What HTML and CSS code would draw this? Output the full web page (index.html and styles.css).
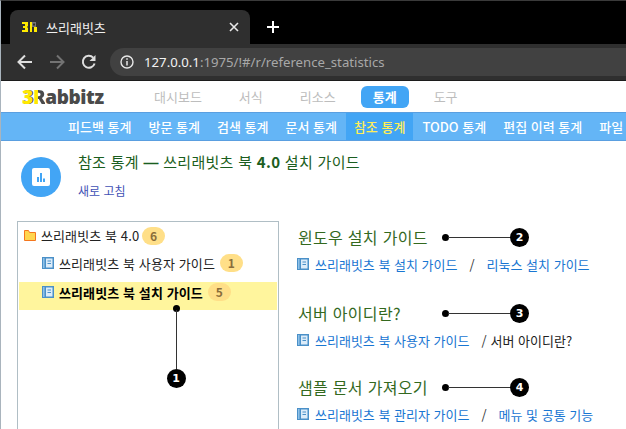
FILE: index.html
```html
<!DOCTYPE html>
<html lang="ko">
<head>
<meta charset="utf-8">
<title>쓰리래빗츠</title>
<link rel="stylesheet" href="styles.css">
</head>
<body>
<div class="window">
  <div class="tabstrip">
    <div class="tab">
      <svg class="favicon" width="16" height="10" viewBox="0 0 16 10"><path d="M0 0h6v4l-1 1 1 1v4H0V8h3V6H1V4h2V2H0z" fill="#ffeb00"/><rect x="8" y="0" width="2" height="10" fill="#ffeb00"/><path d="M10 0h4v5h-4z" fill="#777"/><path d="M11 1.500h2v2h-2z" fill="#2f2f2f"/><rect x="12" y="5" width="3" height="5" fill="#ffeb00"/></svg>
      <span class="tab-title">쓰리래빗츠</span>
      <svg class="tab-close" width="10" height="10" viewBox="0 0 10 10"><path d="M1 1l8 8M9 1l-8 8" stroke="#e8e8e8" stroke-width="1.6"/></svg>
    </div>
    <svg class="newtab" width="14" height="14" viewBox="0 0 14 14"><path d="M7 1v12M1 7h12" stroke="#fff" stroke-width="2"/></svg>
  </div>
  <div class="toolbar">
    <svg class="tb-btn" width="16" height="16" viewBox="0 0 16 16"><path d="M15 8H2M8 1.500L1.500 8 8 14.500" fill="none" stroke="#dedede" stroke-width="2"/></svg>
    <svg class="tb-btn" width="16" height="16" viewBox="0 0 16 16"><path d="M1 8h13M8 1.500L14.500 8 8 14.500" fill="none" stroke="#737373" stroke-width="2"/></svg>
    <svg class="tb-btn" width="16" height="16" viewBox="0 0 16 16"><path d="M13.600 9.500A6 6 0 1 1 12.200 3.600" fill="none" stroke="#dedede" stroke-width="2"/><path d="M14.500 1v6h-6z" fill="#dedede"/></svg>
    <div class="omnibox">
      <svg width="14" height="14" viewBox="0 0 14 14"><circle cx="7" cy="7" r="6" fill="none" stroke="#e8e8e8" stroke-width="1.400"/><path d="M7 6v4.500M7 3.300v1.500" stroke="#e8e8e8" stroke-width="1.500"/></svg>
      <span class="url"><span class="url-host">127.0.0.1</span>:1975/!#/r/reference_statistics</span>
    </div>
  </div>
  <div class="page">
    <header class="topnav">
      <div class="logo"><span class="logo-three">3</span><span class="logo-r">R</span>abbitz</div>
      <nav class="mainmenu">
        <a class="m1">대시보드</a><a class="m2">서식</a><a class="m3">리소스</a><a class="on">통계</a><a class="m5">도구</a>
      </nav>
    </header>
    <nav class="submenu">
      <a>피드백 통계</a><a>방문 통계</a><a>검색 통계</a><a>문서 통계</a><a class="active">참조 통계</a><a>TODO 통계</a><a>편집 이력 통계</a><a>파일</a>
    </nav>
    <section class="heading">
      <div class="badge">
        <svg width="18" height="18" viewBox="0 0 18 18"><rect width="18" height="18" rx="2" fill="#fff"/><path d="M5 9h2v5H5zM8 5h2v9H8zM11 10.500h2V14h-2z" fill="#42a5f5"/></svg>
      </div>
      <div class="heading-text">
        <h1>참조 통계 <b class="dash">—</b> 쓰리래빗츠 북 <b>4.0</b> 설치 가이드</h1>
        <a class="reload">새로 고침</a>
      </div>
    </section>
    <div class="columns">
      <div class="tree">
        <div class="row root">
          <svg width="12" height="11" viewBox="0 0 12 11"><path d="M.5 10.500V.5h4l1 2h6v8z" fill="#ffd54f" stroke="#f4761e"/></svg>
          <span>쓰리래빗츠 북 4.0</span><i class="count">6</i>
        </div>
        <div class="row child">
          <svg class="book" width="12" height="12" viewBox="0 0 12 12"><use href="#book"/></svg>
          <span>쓰리래빗츠 북 사용자 가이드</span><i class="count">1</i>
        </div>
        <div class="row child selected">
          <svg class="book" width="12" height="12" viewBox="0 0 12 12"><use href="#book"/></svg>
          <span>쓰리래빗츠 북 설치 가이드</span><i class="count">5</i>
        </div>
        <div class="callout-v"><em class="dot"></em><em class="line"></em><em class="num">1</em></div>
      </div>
      <div class="refs">
        <div class="ref">
          <div class="ref-title"><span class="ref-name">윈도우 설치 가이드</span><span class="callout-h"><em class="dot"></em><em class="line"></em><em class="num">2</em></span></div>
          <div class="ref-path"><svg class="book" width="12" height="12" viewBox="0 0 12 12"><use href="#book"/></svg><a>쓰리래빗츠 북 설치 가이드</a><span class="sep sep1">/</span><a>리눅스 설치 가이드</a></div>
        </div>
        <div class="ref">
          <div class="ref-title"><span class="ref-name">서버 아이디란?</span><span class="callout-h"><em class="dot"></em><em class="line"></em><em class="num">3</em></span></div>
          <div class="ref-path"><svg class="book" width="12" height="12" viewBox="0 0 12 12"><use href="#book"/></svg><a>쓰리래빗츠 북 사용자 가이드</a><span class="sep sep2">/</span><span class="plain">서버 아이디란?</span></div>
        </div>
        <div class="ref">
          <div class="ref-title"><span class="ref-name">샘플 문서 가져오기</span><span class="callout-h"><em class="dot"></em><em class="line"></em><em class="num">4</em></span></div>
          <div class="ref-path"><svg class="book" width="12" height="12" viewBox="0 0 12 12"><use href="#book"/></svg><a>쓰리래빗츠 북 관리자 가이드</a><span class="sep sep3">/</span><a>메뉴 및 공통 기능</a></div>
        </div>
      </div>
    </div>
  </div>
</div>
<svg class="defs" width="0" height="0"><symbol id="book" viewBox="0 0 12 12"><rect width="12" height="12" fill="#4a90c8"/><rect x="1" y="1" width="1.500" height="10" fill="#8fc1e8"/><rect x="4" y="1.500" width="6.500" height="9" fill="#dcecf9"/><path d="M5.500 4h3.500M5.500 6.500h3.500" stroke="#4a90c8"/></symbol></svg>
</body>
</html>
```
FILE: styles.css
```css
* { box-sizing: border-box; }
html, body { margin: 0; height: 100%; overflow: hidden; background: #fff; }
body { font-family: "Noto Sans CJK KR", "Noto Sans", sans-serif; }
a { text-decoration: none; }
i, em { font-style: normal; display: block; }
.defs { position: absolute; }
.window { width: 626px; height: 429px; display: flex; flex-direction: column; border-top: 1px solid #3a3a3a; border-left: 1px solid #a9b4bd; overflow: hidden; }

.tabstrip { height: 43px; background: #000; display: flex; align-items: flex-end; padding-left: 9px; flex: none; }
.tab { width: 240px; height: 34px; background: #2f2f2f; border-radius: 8px 8px 0 0; display: flex; align-items: center; padding: 0 11px 0 12px; }
.favicon { margin-right: 8px; }
.tab-title { flex: 1; color: #f0f0f0; font-size: 13px; }
.newtab { margin: 0 0 10px 16px; }

.toolbar { height: 37px; background: #2f2f2f; border-bottom: 1px solid #1c1c1c; display: flex; align-items: center; padding-left: 16px; gap: 16px; flex: none; }
.omnibox { flex: 1; height: 28px; margin-left: -3px; background: #414141; border-radius: 14px 0 0 14px; display: flex; align-items: center; padding-left: 10px; gap: 10px; color: #a8a8a8; font-family: "Noto Sans", sans-serif; font-size: 13.2px; }
.url-host { color: #f2f2f2; }

.page { flex: 1; min-height: 0; }
.topnav { height: 31px; display: flex; align-items: center; padding-left: 21px; }
.logo { width: 132px; font-family: "Open Sans", sans-serif; font-weight: 800; font-size: 19px; letter-spacing: -.4px; color: #4a4a4a; line-height: 20px; }
.logo-three { color: #ffe900; text-shadow: 1px 0 0 #333; }
.logo-r { color: transparent; background: linear-gradient(90deg, #ffe900 45%, #4a4a4a 45%); -webkit-background-clip: text; background-clip: text; }
.mainmenu { display: flex; align-items: center; }
.mainmenu a { font-size: 13px; color: #bdbdbd; line-height: 22px; }
.mainmenu .m1 { margin-right: 37px; }
.mainmenu .m2 { margin-right: 37px; }
.mainmenu .m3 { margin-right: 25px; }
.mainmenu .on { width: 48px; text-align: center; background: #42a5f5; border-radius: 6px; color: #fff; font-weight: 700; margin-right: 25px; }

.submenu { height: 29px; background: #64b5f6; border-top: 1px solid #5a9fe0; border-bottom: 1px solid #5a9fe0; display: flex; padding-left: 59px; white-space: nowrap; overflow: hidden; }
.submenu a { color: #fff; font-size: 13px; font-weight: 500; line-height: 27px; padding: 0 8px; margin-right: 1px; }
.submenu .active { background: #42a5f5; color: #ffee58; }

.heading { display: flex; padding: 14px 0 0 20px; height: 80px; }
.badge { width: 40px; height: 40px; border-radius: 50%; background: #42a5f5; display: flex; align-items: center; justify-content: center; margin: 2px 17px 0 0; flex: none; }
.heading-text { margin-top: -3px; }
h1 { margin: 0; font-size: 15px; font-weight: 400; line-height: 20px; letter-spacing: .3px; color: #1b5e20; white-space: nowrap; }
h1 b { font-weight: 700; }
h1 .dash { font-family: "Liberation Sans", sans-serif; }
.reload { display: block; margin-top: 10px; font-size: 12px; line-height: 16px; color: #3f51b5; }

.columns { display: flex; padding-left: 16px; }
.tree { position: relative; width: 262px; height: 260px; border: 1px solid #b0bec5; padding: 0 1px; flex: none; }
.row { height: 28px; display: flex; align-items: center; font-size: 13px; letter-spacing: .1px; color: #222; white-space: nowrap; }
.row svg { margin-right: 5px; flex: none; }
.root { height: 27px; padding-left: 5px; }
.root .count { margin-left: 3px; }
.child { padding-left: 23px; }
.selected { margin-top: 5px; padding-bottom: 8px; background: #fff59d; font-weight: 700; color: #000; }
.count { min-width: 23px; height: 18px; line-height: 18px; margin-left: 5px; text-align: center; border-radius: 9px; background: #ffdf88; color: #8a6d3b; font-weight: 700; font-size: 12px; }

.callout-v { position: absolute; left: 148px; top: 83px; width: 20px; display: flex; flex-direction: column; align-items: center; }
.callout-v .line { width: 1px; height: 59px; background: #333; margin-top: -2px; }
.dot { width: 7px; height: 7px; border-radius: 50%; background: #000; flex: none; }
.num { width: 19px; height: 19px; border-radius: 50%; background: #000; color: #fff; font-size: 11px; line-height: 19px; font-weight: 700; text-align: center; font-family: "DejaVu Sans", sans-serif; flex: none; }

.refs { padding: 5px 0 0 19px; flex: 1; min-width: 0; }
.ref { height: 75px; }
.ref:first-child { height: 76px; }
.ref:nth-child(2) { height: 74px; }
.ref-title { display: flex; align-items: center; height: 22px; }
.ref-name { width: 144px; font-size: 16px; letter-spacing: .3px; color: #33691e; white-space: nowrap; }
.callout-h { display: flex; align-items: center; }
.callout-h .line { width: 63px; height: 1px; background: #333; margin-left: -1px; }
.callout-h .num { margin-left: -1px; }
.ref-path { margin-top: 7px; margin-left: -1px; display: flex; align-items: center; height: 18px; font-size: 13px; color: #1976d2; white-space: nowrap; }
.ref-path svg { margin-right: 6px; flex: none; }
.ref-path a { color: #1976d2; }
.sep { color: #333; }
.sep1 { margin: 0 12px; }
.sep2 { margin: 0 4px 0 12px; }
.sep3 { margin: 0 12px; }
.plain { color: #222; }
```
